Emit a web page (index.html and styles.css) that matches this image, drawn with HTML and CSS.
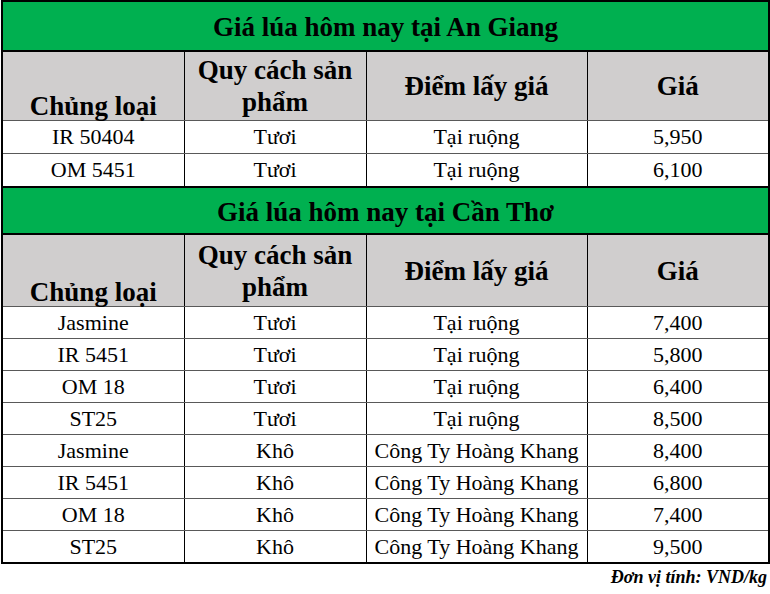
FILE: index.html
```html
<!DOCTYPE html>
<html lang="vi">
<head>
<meta charset="utf-8">
<link rel="stylesheet" href="styles.css">
</head>
<body>
<div class="sheet">
<table class="price">
<colgroup><col class="w1"><col class="w2"><col class="w3"><col class="w4"></colgroup>
<tr class="title t1"><td colspan="4">Giá lúa hôm nay tại An Giang</td></tr>
<tr class="head h1"><th class="kind">Chủng loại</th><th>Quy cách sản phẩm</th><th>Điểm lấy giá</th><th>Giá</th></tr>
<tr class="row r33"><td>IR 50404</td><td>Tươi</td><td>Tại ruộng</td><td>5,950</td></tr>
<tr class="row r33"><td>OM 5451</td><td>Tươi</td><td>Tại ruộng</td><td>6,100</td></tr>
<tr class="title t2"><td colspan="4">Giá lúa hôm nay tại Cần Thơ</td></tr>
<tr class="head h2"><th class="kind">Chủng loại</th><th>Quy cách sản phẩm</th><th>Điểm lấy giá</th><th>Giá</th></tr>
<tr class="row"><td>Jasmine</td><td>Tươi</td><td>Tại ruộng</td><td>7,400</td></tr>
<tr class="row"><td>IR 5451</td><td>Tươi</td><td>Tại ruộng</td><td>5,800</td></tr>
<tr class="row"><td>OM 18</td><td>Tươi</td><td>Tại ruộng</td><td>6,400</td></tr>
<tr class="row"><td>ST25</td><td>Tươi</td><td>Tại ruộng</td><td>8,500</td></tr>
<tr class="row"><td>Jasmine</td><td>Khô</td><td>Công Ty Hoàng Khang</td><td>8,400</td></tr>
<tr class="row"><td>IR 5451</td><td>Khô</td><td>Công Ty Hoàng Khang</td><td>6,800</td></tr>
<tr class="row"><td>OM 18</td><td>Khô</td><td>Công Ty Hoàng Khang</td><td>7,400</td></tr>
<tr class="row last"><td>ST25</td><td>Khô</td><td>Công Ty Hoàng Khang</td><td>9,500</td></tr>
</table>
<p class="unit">Đơn vị tính: VND/kg</p>
</div>
</body>
</html>
```
FILE: styles.css
```css
html, body {
  margin: 0;
  padding: 0;
  background: #ffffff;
}
.sheet {
  width: 770px;
  padding: 0 0 0 1px;
  font-family: "Liberation Serif", "Times New Roman", serif;
  color: #000;
}
.price {
  border-collapse: collapse;
  table-layout: fixed;
  width: 768px;
  border: 2px solid #000;
}
.w1 { width: 182px; }
.w2 { width: 182px; }
.w3 { width: 221px; }
.w4 { width: 182px; }
.price td, .price th {
  padding: 0 4px;
  text-align: center;
  border-left: 1px solid #000;
  border-right: 1px solid #000;
}
.title td {
  background: #00b050;
  font-weight: bold;
  font-size: 27px;
  border-top: 2px solid #000;
  border-bottom: 2px solid #000;
  vertical-align: middle;
  padding-top: 3px;
}
.t1 td { height: 45px; }
.t2 td { height: 42px; }
.head th {
  background: #d0cece;
  font-weight: bold;
  font-size: 27px;
  line-height: 32px;
  vertical-align: middle;
  border-bottom: 1px solid #595959;
}
.head th.kind { vertical-align: bottom; line-height: 27px; }
.h1 th { height: 68px; }
.h2 th { height: 71px; }
.row td {
  font-size: 22px;
  height: 31px;
  line-height: 26px;
  vertical-align: middle;
  border-bottom: 1px solid #595959;
}
.r33 td { height: 32px; }
.row.last td { border-bottom: 2px solid #000; }
.unit {
  margin: 2px 4px 0 0;
  text-align: right;
  font-size: 18px;
  font-weight: bold;
  font-style: italic;
  line-height: 22px;
}
```
